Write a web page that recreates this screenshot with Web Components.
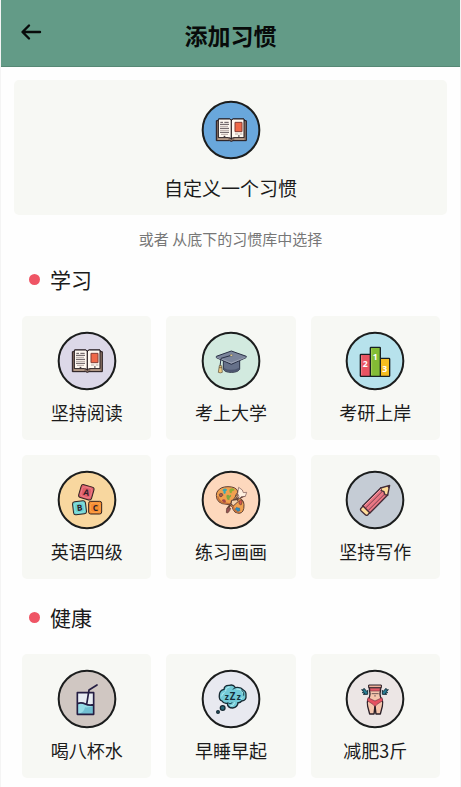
<!DOCTYPE html>
<html lang="zh-CN">
<head>
<meta charset="utf-8">
<meta name="viewport" content="width=device-width, initial-scale=1">
<title>添加习惯</title>
<style>
  body {
    margin: 0;
    padding: 0 1px;
    background: #f4f4f4;
    color: #1b1b1b;
    font-family: "Noto Sans CJK SC", sans-serif;
  }
</style>
</head>
<body>
<habit-page>
  <app-header slot="header">添加习惯</app-header>
  <habit-card wide icon="book" color="#69a7dc">自定义一个习惯</habit-card>
  <habit-hint>或者 从底下的习惯库中选择</habit-hint>
  <habit-section heading="学习">
    <habit-card icon="book" color="#dcd8e8">坚持阅读</habit-card>
    <habit-card icon="cap" color="#d2eadf">考上大学</habit-card>
    <habit-card icon="podium" color="#b7e2ec">考研上岸</habit-card>
    <habit-card icon="blocks" color="#f8d79f">英语四级</habit-card>
    <habit-card icon="palette" color="#fdd8bd">练习画画</habit-card>
    <habit-card icon="pencil" color="#c5ccd5">坚持写作</habit-card>
  </habit-section>
  <habit-section heading="健康">
    <habit-card icon="water" color="#d0c7c2">喝八杯水</habit-card>
    <habit-card icon="sleep" color="#e8e9f0">早睡早起</habit-card>
    <habit-card icon="body" color="#ece6e5">减肥3斤</habit-card>
  </habit-section>
</habit-page>

<script>
const ICONS = {
  book: /* svg */`
    <path d="M76 92h7v-5h34l4 4 4-4h34v5h7v60H126q-5 4-10 0H76z" fill="#8d7467" stroke="#21171b" stroke-width="3"/>
    <path d="M82 87h33q6 0 6 6v54q-3-4-8-4H82z" fill="#fff9f1" stroke="#21171b" stroke-width="3"/>
    <path d="M159 87h-32q-6 0-6 6v54q3-4 8-4h30z" fill="#fff9f1" stroke="#21171b" stroke-width="3"/>
    <path d="M81 147h31M130 147h30" stroke="#d9bda5" stroke-width="3"/>
    <path d="M88 97h8m4 0h13M87 103h27M87 115h27M87 127h27" stroke="#5b5053" stroke-width="3"/>
    <path d="M87 109h24M87 121h27M90 133h21M132 132h10m4 0h8" stroke="#8e7e7b" stroke-width="2"/>
    <path d="M132 97h21v28h-21z" fill="#ef6848" stroke="#843c34" stroke-width="3"/>
    <path d="M98 139h5M141 138h5" stroke="#21171b" stroke-width="3"/>`,
  cap: /* svg */`
    <path d="M97 116v29q5 9 24 9 19 0 25-9v-29z" fill="#66718a" stroke="#293045" stroke-width="3"/>
    <path d="M98 140q20 13 47 0v6q-22 14-47 0z" fill="#4c566f"/>
    <path d="M76 106l45-16 45 16-1 4-44 20-45-20z" fill="#7b859b" stroke="#293045" stroke-width="3" stroke-linejoin="round"/>
    <path d="M77 109l44 17 43-17" fill="none" stroke="#adb4c3" stroke-width="2"/>
    <path d="M121 103l-31 9-3 24" fill="none" stroke="#293045" stroke-width="3"/>
    <ellipse cx="121" cy="103" rx="4" ry="3" fill="#ecd38e" stroke="#293045"/>
    <path d="M85 134h7l2 20q-6 3-12 0z" fill="#edcc82" stroke="#594a35" stroke-width="2"/>
    <path d="M84 140h9" stroke="#594a35" stroke-width="2"/>`,
  podium: /* svg */`
    <g stroke="#182025" stroke-width="4" stroke-linejoin="round">
      <rect x="76" y="100" width="31" height="66" rx="2" fill="#e85462"/>
      <rect x="135" y="112" width="29" height="54" rx="2" fill="#f6bd20"/>
      <rect x="106" y="79" width="30" height="87" rx="2" fill="#83bc35"/>
    </g>
    <path d="M80 104v58" stroke="#f27b83" stroke-width="3"/>
    <path d="M110 83v79" stroke="#a4d058" stroke-width="3"/>
    <g fill="#fff" font-size="26" font-weight="700" text-anchor="middle">
      <text x="121" y="117">1</text><text x="91" y="138">2</text><text x="149" y="154">3</text>
    </g>`,
  blocks: /* svg */`
    <g stroke="#302222" stroke-width="3">
      <rect x="98" y="77" width="40" height="40" rx="7" fill="#df5f6b" transform="rotate(16 118 97)"/>
      <rect x="78" y="124" width="39" height="39" rx="7" fill="#6bd2d1" transform="rotate(-7 97 143)"/>
      <rect x="125" y="124" width="39" height="38" rx="6" fill="#f68d31"/>
    </g>
    <g fill="none" stroke-width="2">
      <rect x="103" y="82" width="30" height="30" rx="8" stroke="#f28b91" transform="rotate(16 118 97)"/>
      <rect x="83" y="129" width="29" height="29" rx="8" stroke="#a0e7e3" transform="rotate(-7 97 143)"/>
      <rect x="130" y="129" width="29" height="28" rx="8" stroke="#ffb15e"/>
    </g>
    <g fill="#30202a" font-size="25" font-weight="700" text-anchor="middle">
      <text x="118" y="106" transform="rotate(12 118 97)">A</text>
      <text x="98" y="152" transform="rotate(-7 97 143)">B</text><text x="145" y="152">C</text>
    </g>`,
  palette: /* svg */`
    <path d="M80 93q9-13 31-13 23 0 29 13 1 7-5 10-5 7 4 11 19 1 20 20 1 25-15 26-14 0-18-12-2-14-18-15-32-1-32-27 0-8 4-13z" fill="#f1a14f" stroke="#604035" stroke-width="3"/>
    <path d="M80 109q5 21 29 21 18 0 21 18 4 10 15 9" fill="none" stroke="#c46e39" stroke-width="4"/>
    <path d="M84 104q4-6 10-3 4 5-1 8-7 5-9-5z" fill="#a45b51" stroke="#604035" stroke-width="2"/>
    <path d="M95 89q7-6 12-1 3 5-3 5 2 8-3 9-6-2-3-8-4 0-3-5z" fill="#36a8b5"/>
    <path d="M115 89q7-6 13-3 5 4-1 6-6 1-5 7-7 3-7-10z" fill="#8fae36"/>
    <path d="M106 107q5-5 9 0l4-3q4 5-3 9l-1 7q-7 1-8-6z" fill="#7fa743"/>
    <path d="M92 121q5-6 11-2l2 8-6 1z" fill="#a34847"/>
    <path d="M134 145q3-6 7-1 7-2 5 4 4 5-3 6-6 1-6-3-7-1-3-6z" fill="#2c8dbb" stroke="#495366"/>
    <path d="M144 124q5-7 10-1l-3 11q-8 2-7-10z" fill="#d8574c" stroke="#604035" stroke-width="2"/>
    <path d="M108 148l35-48" stroke="#604035" stroke-width="6"/>
    <path d="M119 134l22-31" stroke="#f2cb9c" stroke-width="2"/>
    <path d="M106 158q-2-12 6-16l7 3q-2 8-9 14z" fill="#965252" stroke="#604035" stroke-width="2"/>
    <path d="M120 126l42-20" stroke="#604035" stroke-width="6"/>
    <path d="M140 101l3-19 11 8 3 8 10-1-4 12-12 1-8 8 1-9z" fill="#fff0df" stroke="#765150" stroke-width="2"/>
    <path d="M122 121l16-2 4 5-14 13-8-4z" fill="#f1d1ad" stroke="#604035" stroke-width="3"/>`,
  pencil: /* svg */`
    <g stroke="#432b36" stroke-width="4" stroke-linejoin="round">
      <path d="M83 138l54-54 21 21-54 55z" fill="#ea7784"/>
      <path d="M137 84l27-8-6 29-9-1-2-9-8-3z" fill="#ffdc99"/>
      <path d="M84 138l20 20-6 7q-4 3-7-1l-13-12q-3-4 0-7z" fill="#ffdc99"/>
    </g>
    <path d="M88 137l50-50" stroke="#f49aa2" stroke-width="3"/>
    <path d="M92 144l50-50M99 152l51-51" stroke="#753f4d" stroke-width="3"/>
    <path d="M156 79l8-3-2 10z" fill="#432b36"/>`,
  water: /* svg */`
    <path d="M91 101h49v65H91z" fill="#e8edf3"/>
    <path d="M91 134q12-5 24 1t25 2v29H91z" fill="#96dce7"/>
    <path d="M114 145q15 1 24-4v23H97q15-5 17-19z" fill="#71bfd2"/>
    <path d="M91 134q12-5 24 1t25 2M119 136l7-43 24-15M91 101h49v65H91z" fill="none" stroke="#251e43" stroke-width="5" stroke-linecap="round" stroke-linejoin="round"/>`,
  sleep: /* svg */`
    <path d="M99 91q1-13 16-12 12-4 18 7 16-3 24 7 9 4 8 16 2 15-13 17-5 6-11 5-1 14-16 16-15 0-16-14-11 2-16-7-10-4-8-17 0-15 14-18z" fill="#72cad7" stroke="#172a34" stroke-width="4"/>
    <path d="M104 96q0-11 11-12M137 90q17 0 20 14m-3 12q-4 6-12 6M131 131q-2 10-12 10M92 111q1-9 8-10" fill="none" stroke="#b5edf0" stroke-width="3" stroke-linecap="round"/>
    <path d="M132 87l-7 4M151 93q11 6 7 17M110 131q7 7 14 0" fill="none" stroke="#1b4350" stroke-width="3"/>
    <g fill="#152d38" font-weight="700" text-anchor="middle">
      <text x="107" y="123" font-size="25">z</text>
      <text x="125" y="123" font-size="29">Z</text>
      <text x="143" y="123" font-size="25">z</text>
    </g>
    <circle cx="95" cy="147" r="7" fill="#286b7b" stroke="#172a34" stroke-width="4"/>
    <circle cx="81" cy="159" r="4" fill="#286b7b" stroke="#172a34" stroke-width="4"/>`,
  body: /* svg */`
    <path d="M102 80h36l-3 25q0 9 6 17 4 8 1 20l-6 23h-13l-3-26-3 26h-13l-6-23q-3-12 1-20 6-8 6-17z" fill="#f6c6ad" stroke="#2c2028" stroke-width="4" stroke-linejoin="round"/>
    <path d="M101 78h38v8h-38z" fill="#efb19b" stroke="#2c2028" stroke-width="3"/>
    <path d="M105 88h30l-1 8h-28z" fill="#e65a67" stroke="#783341" stroke-width="2"/>
    <path d="M110 104h21M120 108v5" stroke="#2c2028" stroke-width="2"/>
    <path d="M99 116l21 10 21-10 2 9-17 11-6 7-6-7-17-11z" fill="#e65260" stroke="#713141" stroke-width="2"/>
    <path d="M120 142v22" stroke="#2c2028" stroke-width="3"/>
    <path d="M80 92l6 1 1-5 9 10 2-4v12H85l5-3-8-2 3-3z" fill="#287f96" stroke="#17323e" stroke-width="3"/>
    <path d="M160 92l-6 1-1-5-9 10-2-4v12h13l-5-3 8-2-3-3z" fill="#287f96" stroke="#17323e" stroke-width="3"/>`
};

class HabitIcon extends HTMLElement {
  connectedCallback() {
    if (!this.shadowRoot) this.attachShadow({ mode: "open" });
    this.shadowRoot.innerHTML = /* html */`
    <style>
      :host { display: block; width: 60px; height: 60px; }
      svg { display: block; width: 100%; height: 100%; font-family: "Open Sans", sans-serif; }
    </style>
    <svg viewBox="30 30 180 180" aria-hidden="true">
      <circle cx="120" cy="120" r="85" fill="${this.getAttribute("color")}" stroke="#1b1d1d" stroke-width="6"/>
      ${ICONS[this.getAttribute("name")]}
    </svg>`;
  }
}

class HabitCard extends HTMLElement {
  connectedCallback() {
    if (!this.shadowRoot) this.attachShadow({ mode: "open" });
    this.shadowRoot.innerHTML = /* html */`
    <style>
      :host { display: block; }
      button {
        display: flex;
        flex-direction: column;
        align-items: center;
        gap: 10px;
        width: 100%;
        padding: 15px 0 17px;
        border: 0;
        border-radius: 5px;
        background: #f7f8f4;
        color: inherit;
        font: 18px/22px "Noto Sans CJK SC", sans-serif;
        cursor: pointer;
      }
      :host([wide]) button {
        gap: 14px;
        padding: 20px 0 13px;
        font-size: 19px;
        line-height: 28px;
      }
    </style>
    <button type="button">
      <habit-icon name="${this.getAttribute("icon")}" color="${this.getAttribute("color")}"></habit-icon>
      <span><slot></slot></span>
    </button>`;
  }
}

class HabitHint extends HTMLElement {
  connectedCallback() {
    if (!this.shadowRoot) this.attachShadow({ mode: "open" });
    this.shadowRoot.innerHTML = /* html */`
    <style>
      :host { display: block; margin: 14px 0 16px; }
      p { margin: 0; color: #777; font-size: 15px; line-height: 20px; text-align: center; }
    </style>
    <p><slot></slot></p>`;
  }
}

class HabitSection extends HTMLElement {
  connectedCallback() {
    if (!this.shadowRoot) this.attachShadow({ mode: "open" });
    this.shadowRoot.innerHTML = /* html */`
    <style>
      :host { display: block; padding: 0 7px 0 8px; margin-bottom: 24px; }
      h2 {
        display: flex;
        align-items: center;
        gap: 10px;
        margin: 0 0 23px;
        padding-left: 7px;
        font-size: 21px;
        font-weight: 400;
        line-height: 28px;
      }
      h2::before {
        content: "";
        width: 11px;
        height: 11px;
        border-radius: 50%;
        background: #ef5565;
      }
      .grid { display: grid; grid-template-columns: repeat(3, 1fr); gap: 15px; }
    </style>
    <section>
      <h2>${this.getAttribute("heading")}</h2>
      <div class="grid"><slot></slot></div>
    </section>`;
  }
}

class AppHeader extends HTMLElement {
  connectedCallback() {
    if (!this.shadowRoot) this.attachShadow({ mode: "open" });
    this.shadowRoot.innerHTML = /* html */`
    <style>
      :host { display: block; }
      header {
        display: grid;
        grid-template-columns: 24px 1fr 24px;
        padding: 20px 18px 16px;
        background: #639b87;
        border-bottom: 1px solid #568875;
        color: #080b0a;
      }
      button { height: 24px; padding: 0; border: 0; background: none; color: inherit; cursor: pointer; }
      svg { display: block; }
      h1 { margin: 0; font-size: 23px; font-weight: 700; line-height: 30px; text-align: center; }
    </style>
    <header>
      <button type="button" aria-label="返回">
        <svg width="24" height="24" viewBox="0 0 24 24" fill="none" stroke="currentColor" stroke-width="2.4" stroke-linecap="round" stroke-linejoin="round">
          <path d="M21 12H4M10 5.500l-6.500 6.500 6.500 6.500"/>
        </svg>
      </button>
      <h1><slot></slot></h1>
    </header>`;
  }
}

class HabitPage extends HTMLElement {
  connectedCallback() {
    if (!this.shadowRoot) this.attachShadow({ mode: "open" });
    this.shadowRoot.innerHTML = /* html */`
    <style>
      :host { display: block; min-height: 100vh; background: #fefefe; }
      main { display: flow-root; padding: 13px 13px 0; }
      ::slotted(habit-section:last-child) { margin-bottom: 9px; }
    </style>
    <slot name="header"></slot>
    <main><slot></slot></main>`;
  }
}

customElements.define("habit-icon", HabitIcon);
customElements.define("habit-card", HabitCard);
customElements.define("habit-hint", HabitHint);
customElements.define("habit-section", HabitSection);
customElements.define("app-header", AppHeader);
customElements.define("habit-page", HabitPage);
</script>
</body>
</html>
